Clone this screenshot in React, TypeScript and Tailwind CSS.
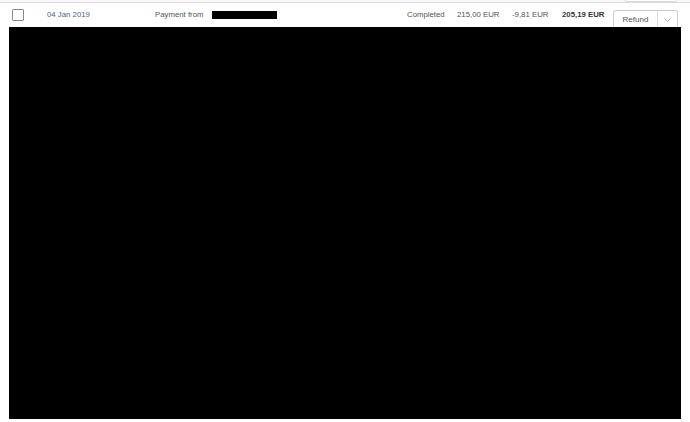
import React from 'react';

const font = { fontFamily: '"Liberation Sans", Arial, sans-serif' };

interface RowProps {
  date: string;
  label: string;
  status: string;
  gross: string;
  fee: string;
  net: string;
}

const Row: React.FC<RowProps> = ({ date, label, status, gross, fee, net }) => (
  <div className="flex h-[25px] items-center border-t border-[#dcdcdc] bg-white text-[7.8px] text-[#555]">
    <div className="ml-[12px] h-[12px] w-[12px] rounded-[1px] border border-[#8a8a8a] bg-white" />
    <div className="ml-[23px] w-[108px] text-[#4f6580]">{date}</div>
    <div className="w-[57px]">{label}</div>
    <div className="h-[8px] w-[65px] bg-black" />
    <div className="ml-[130px] w-[50px]">{status}</div>
    <div className="w-[55px]">{gross}</div>
    <div className="w-[50px]">{fee}</div>
    <div className="w-[51px] font-bold text-[#333]">{net}</div>
    <div className="flex h-[17px] items-stretch self-end rounded-t-[3px] border border-b-0 border-[#cfcfcf] bg-white">
      <div className="flex w-[43px] items-center justify-center pt-[2px] text-[8px] text-[#555]">Refund</div>
      <div className="flex w-[20px] items-center justify-center border-l border-[#dcdcdc] pt-[2px]">
        <svg width="7" height="4" viewBox="0 0 7 4" fill="none">
          <path d="M0.5 0.5 L3.5 3.5 L6.5 0.5" stroke="#9aa3ad" strokeWidth="0.8" />
        </svg>
      </div>
    </div>
  </div>
);

export default function App() {
  return (
    <div className="relative h-[422px] w-[690px] overflow-hidden bg-white" style={font}>
      <div className="flex h-[2px] justify-end bg-[#f7f7f7] pr-[13px]">
        <div className="h-[2px] w-[52px] rounded-b-[2px] border border-t-0 border-[#d8d8d8] bg-white" />
      </div>
      <Row
        date="04 Jan 2019"
        label="Payment from"
        status="Completed"
        gross="215,00 EUR"
        fee="-9,81 EUR"
        net="205,19 EUR"
      />
      <div className="ml-[9px] h-[392px] w-[672px] bg-black" />
      <div className="-mt-[2px] flex h-[10px] items-start pt-[3px] text-[7.8px] text-[#777]">
        <div className="ml-[51px] w-[91px]">03 Jan 2019</div>
        <div className="w-[62px]">Payment from</div>
        <div className="w-[221px]">Customer Name</div>
        <div className="w-[48px]">Completed</div>
        <div className="w-[51px]">100,00 EUR</div>
        <div className="w-[49px]">-4,61 EUR</div>
        <div className="font-bold">95,39 EUR</div>
      </div>
    </div>
  );
}
